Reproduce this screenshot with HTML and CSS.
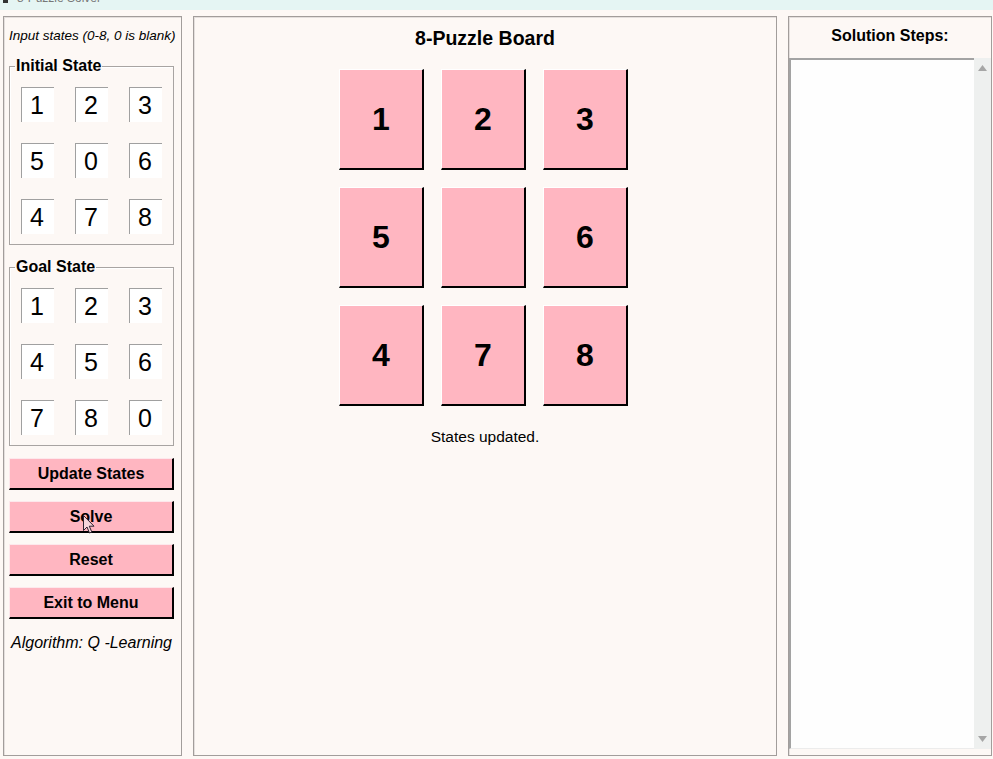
FILE: index.html
```html
<!DOCTYPE html>
<html>
<head>
<meta charset="utf-8">
<title>8-Puzzle Solver</title>
<link rel="stylesheet" href="styles.css">
</head>
<body>
<div class="titlebar">
  <span class="tb-icon"></span>
  <span class="tb-text">8-Puzzle Solver</span>
</div>
<div class="main">
  <div class="panel left">
    <div class="hint">Input states (0-8, 0 is blank)</div>
    <fieldset class="group first">
      <legend>Initial State</legend>
      <div class="grid">
        <span class="entry">1</span><span class="entry">2</span><span class="entry">3</span>
        <span class="entry">5</span><span class="entry">0</span><span class="entry">6</span>
        <span class="entry">4</span><span class="entry">7</span><span class="entry">8</span>
      </div>
    </fieldset>
    <fieldset class="group second">
      <legend>Goal State</legend>
      <div class="grid">
        <span class="entry">1</span><span class="entry">2</span><span class="entry">3</span>
        <span class="entry">4</span><span class="entry">5</span><span class="entry">6</span>
        <span class="entry">7</span><span class="entry">8</span><span class="entry">0</span>
      </div>
    </fieldset>
    <div class="buttons">
      <div class="btn">Update States</div>
      <div class="btn">Solve
        <svg class="cursor" width="13" height="20" viewBox="0 0 13 20"><path d="M0.5 0.5 L0.5 15.5 L4 12 L6.5 18 L8.8 17 L6.3 11.2 L11 11.2 Z" fill="#f7d6dc" stroke="#2a2330" stroke-width="1" stroke-linejoin="round"/></svg>
      </div>
      <div class="btn">Reset</div>
      <div class="btn">Exit to Menu</div>
    </div>
    <div class="algo">Algorithm: Q -Learning</div>
  </div>

  <div class="panel center">
    <div class="board-title">8-Puzzle Board</div>
    <div class="board">
      <div class="tile">1</div><div class="tile">2</div><div class="tile">3</div>
      <div class="tile">5</div><div class="tile"></div><div class="tile">6</div>
      <div class="tile">4</div><div class="tile">7</div><div class="tile">8</div>
    </div>
    <div class="status">States updated.</div>
  </div>

  <div class="panel right">
    <div class="steps-title">Solution Steps:</div>
    <div class="steps-box">
      <div class="steps-list"></div>
      <div class="scrollbar">
        <svg width="9" height="6" viewBox="0 0 9 6"><path d="M4.5 0 L9 6 L0 6 Z" fill="#a6a6a6"/></svg>
        <svg width="9" height="6" viewBox="0 0 9 6"><path d="M0 0 L9 0 L4.5 6 Z" fill="#a6a6a6"/></svg>
      </div>
    </div>
  </div>
</div>
</body>
</html>
```
FILE: styles.css
```css
html, body {
  margin: 0;
  padding: 0;
}
body {
  width: 993px;
  height: 759px;
  overflow: hidden;
  background: #fdf8f5;
  font-family: "Liberation Sans", Arial, sans-serif;
  color: #000;
}
.titlebar {
  height: 10px;
  background: #e5f5f3;
  overflow: hidden;
  display: flex;
  align-items: flex-start;
  gap: 9px;
  padding-left: 3px;
}
.tb-icon {
  width: 5px;
  height: 3px;
  background: #333;
}
.tb-text {
  font-size: 12px;
  line-height: 12px;
  color: #777;
  margin-top: -8px;
}
.main {
  display: flex;
  gap: 11px;
  padding: 6px 0 0 3px;
}
.panel {
  box-sizing: border-box;
  height: 740px;
  border: 1px solid #a29d9b;
  box-shadow: inset 1px 1px 0 #e4dfdd;
  background: #fdf8f5;
}
/* left panel */
.left {
  width: 179px;
  display: flex;
  flex-direction: column;
  align-items: flex-start;
  padding-left: 5px;
}
.hint {
  width: 165px;
  margin-top: 11px;
  font-size: 13.5px;
  line-height: 15px;
  font-style: italic;
  text-align: center;
  white-space: nowrap;
}
.group {
  box-sizing: border-box;
  width: 165px;
  margin: 0;
  padding: 12px 0 10px 0;
  border: 1px solid #a8a4a2;
  box-shadow: inset 1px 1px 0 #fff;
}
.group.first { margin-top: 14px; }
.group.second { margin-top: 13px; }
.group legend {
  margin-left: 5px;
  padding: 0 1px;
  font-weight: bold;
  font-size: 16px;
  line-height: 18px;
}
.grid {
  display: grid;
  grid-template-columns: repeat(3, 33px);
  grid-auto-rows: 35px;
  gap: 21px;
  justify-content: center;
}
.entry {
  box-sizing: border-box;
  height: 35px;
  background: #fff;
  border-top: 1px solid #a0a0a0;
  border-left: 1px solid #a0a0a0;
  padding: 1px 0 0 8px;
  font-size: 25px;
  line-height: 33px;
  overflow: hidden;
}
.buttons {
  display: flex;
  flex-direction: column;
  gap: 11px;
  margin-top: 12px;
}
.btn {
  position: relative;
  box-sizing: border-box;
  width: 165px;
  height: 32px;
  background: #ffb6c1;
  border-top: 1px solid #fde8ec;
  border-left: 1px solid #fde8ec;
  border-right: 2px solid #000;
  border-bottom: 2px solid #000;
  font-weight: bold;
  font-size: 16px;
  line-height: 29px;
  text-align: center;
}
.cursor {
  position: absolute;
  left: 73px;
  top: 13px;
}
.algo {
  width: 165px;
  margin-top: 15px;
  font-style: italic;
  font-size: 16px;
  line-height: 18px;
  text-align: center;
  white-space: nowrap;
}
/* center panel */
.center {
  width: 584px;
  display: flex;
  flex-direction: column;
  align-items: center;
}
.board-title {
  margin-top: 10px;
  font-weight: bold;
  font-size: 19.5px;
  line-height: 22px;
}
.board {
  margin-top: 20px;
  margin-right: 3px;
  display: grid;
  grid-template-columns: repeat(3, 85px);
  grid-auto-rows: 101px;
  gap: 17px;
}
.tile {
  box-sizing: border-box;
  background: #ffb6c1;
  border-top: 1px solid #fff;
  border-left: 1px solid #fff;
  border-right: 2px solid #000;
  border-bottom: 2px solid #000;
  display: flex;
  align-items: center;
  justify-content: center;
  font-weight: bold;
  font-size: 32px;
}
.status {
  margin-top: 22px;
  font-size: 15.5px;
  line-height: 18px;
}
/* right panel */
.right {
  width: 204px;
  display: flex;
  flex-direction: column;
}
.steps-title {
  margin-top: 10px;
  font-weight: bold;
  font-size: 16px;
  line-height: 18px;
  text-align: center;
}
.steps-box {
  margin-top: 13px;
  height: 691px;
  display: flex;
}
.steps-list {
  box-sizing: border-box;
  flex: 1;
  background: #fefefe;
  border-top: 2px solid #a3a3a3;
  border-left: 2px solid #a3a3a3;
  border-bottom: 1px solid #ececec;
}
.scrollbar {
  width: 17px;
  background: #eef0ef;
  display: flex;
  flex-direction: column;
  justify-content: space-between;
  align-items: center;
  padding: 7px 0 7px 0;
  box-sizing: border-box;
}
```
